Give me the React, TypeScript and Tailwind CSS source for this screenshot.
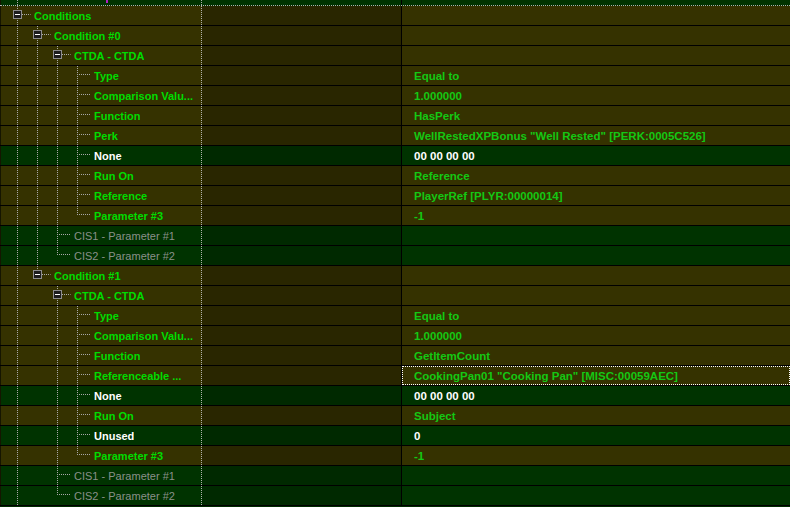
type Tone = 'olive' | 'green'

type Row = {
  label: string
  value?: string
  level: number
  box?: boolean
  last?: boolean
  guides: number[]
  tone: Tone
  white?: boolean
  dim?: boolean
  focus?: boolean
}

const rows: Row[] = [
  { label: 'Conditions', level: 0, box: true, guides: [], tone: 'olive' },
  { label: 'Condition #0', level: 1, box: true, guides: [0], tone: 'olive' },
  { label: 'CTDA - CTDA', level: 2, box: true, guides: [0, 1], tone: 'olive' },
  { label: 'Type', value: 'Equal to', level: 3, guides: [0, 1, 2], tone: 'olive' },
  { label: 'Comparison Valu...', value: '1.000000', level: 3, guides: [0, 1, 2], tone: 'olive' },
  { label: 'Function', value: 'HasPerk', level: 3, guides: [0, 1, 2], tone: 'olive' },
  {
    label: 'Perk',
    value: 'WellRestedXPBonus "Well Rested" [PERK:0005C526]',
    level: 3,
    guides: [0, 1, 2],
    tone: 'olive',
  },
  { label: 'None', value: '00 00 00 00', level: 3, guides: [0, 1, 2], tone: 'green', white: true },
  { label: 'Run On', value: 'Reference', level: 3, guides: [0, 1, 2], tone: 'olive' },
  {
    label: 'Reference',
    value: 'PlayerRef [PLYR:00000014]',
    level: 3,
    guides: [0, 1, 2],
    tone: 'olive',
  },
  { label: 'Parameter #3', value: '-1', level: 3, last: true, guides: [0, 1, 2], tone: 'olive' },
  { label: 'CIS1 - Parameter #1', level: 2, guides: [0, 1], tone: 'green', dim: true },
  { label: 'CIS2 - Parameter #2', level: 2, last: true, guides: [0, 1], tone: 'green', dim: true },
  { label: 'Condition #1', level: 1, box: true, last: true, guides: [0], tone: 'olive' },
  { label: 'CTDA - CTDA', level: 2, box: true, guides: [0], tone: 'olive' },
  { label: 'Type', value: 'Equal to', level: 3, guides: [0, 2], tone: 'olive' },
  { label: 'Comparison Valu...', value: '1.000000', level: 3, guides: [0, 2], tone: 'olive' },
  { label: 'Function', value: 'GetItemCount', level: 3, guides: [0, 2], tone: 'olive' },
  {
    label: 'Referenceable ...',
    value: 'CookingPan01 "Cooking Pan" [MISC:00059AEC]',
    level: 3,
    guides: [0, 2],
    tone: 'olive',
    focus: true,
  },
  { label: 'None', value: '00 00 00 00', level: 3, guides: [0, 2], tone: 'green', white: true },
  { label: 'Run On', value: 'Subject', level: 3, guides: [0, 2], tone: 'olive' },
  { label: 'Unused', value: '0', level: 3, guides: [0, 2], tone: 'green', white: true },
  { label: 'Parameter #3', value: '-1', level: 3, last: true, guides: [0, 2], tone: 'olive' },
  { label: 'CIS1 - Parameter #1', level: 2, guides: [0], tone: 'green', dim: true },
  { label: 'CIS2 - Parameter #2', level: 2, last: true, guides: [0], tone: 'green', dim: true },
]

const DOT = '#a8a8a8'

// x of the guide line for a level, in svg coordinates (after the 1px edge strip)
const gx = (level: number) => 16 + 20 * level + 0.5

function TreeGuides({ row }: { row: Row }) {
  const x = gx(row.level)
  const width = 33 + 20 * row.level
  return (
    <svg width={width} height={19} className="shrink-0">
      {row.guides.map((k) => (
        <line key={k} x1={gx(k)} y1={0} x2={gx(k)} y2={19} stroke={DOT} strokeDasharray="1 1" />
      ))}
      <line x1={x} y1={0} x2={x} y2={row.last ? 9 : 19} stroke={DOT} strokeDasharray="1 1" />
      <line
        x1={x + (row.box ? 4.5 : 1.5)}
        y1={8.5}
        x2={x + 13}
        y2={8.5}
        stroke={DOT}
        strokeDasharray="1 1"
      />
      {row.box && (
        <>
          <rect x={x - 4} y={4.5} width={8} height={8} fill="#1c1c1c" stroke="#8c8c8c" />
          <line x1={x - 2.5} y1={8.5} x2={x + 2.5} y2={8.5} stroke="#ffffff" />
        </>
      )}
    </svg>
  )
}

function TreeRow({ row }: { row: Row }) {
  const green = row.tone === 'green'
  const labelColor = row.dim ? 'text-[#8a908a] font-normal' : row.white ? 'text-white' : 'text-[#00dc00]'
  return (
    <div className="flex h-[20px] border-b border-black">
      <div className="w-[1px] shrink-0 bg-[#151500]" />
      <div
        className={`flex w-[201px] shrink-0 items-center border-r border-dotted border-[#b0b0b0] ${
          green ? 'bg-[#003300]' : 'bg-[#353200]'
        }`}
      >
        <TreeGuides row={row} />
        <span className={`truncate whitespace-nowrap pt-[1px] leading-[18px] ${labelColor}`}>
          {row.label}
        </span>
      </div>
      <div
        className={`w-[200px] shrink-0 border-r border-black ${green ? 'bg-[#002900]' : 'bg-[#292600]'}`}
      />
      <div
        className={`flex flex-1 items-center pt-[1px] pl-[12px] text-[11.5px] whitespace-nowrap leading-[18px] ${
          green ? 'bg-[#003300]' : 'bg-[#353200]'
        } ${row.white ? 'text-white' : 'text-[#14c814]'} ${
          row.focus ? 'outline-1 -outline-offset-1 outline-dotted outline-white' : ''
        }`}
      >
        {row.value}
      </div>
    </div>
  )
}

export default function App() {
  return (
    <div className="h-screen w-full overflow-hidden bg-[#002900] font-['Liberation_Sans',Arial,sans-serif] text-[11px] font-bold">
      <div className="flex h-[6px] border-b border-dotted border-[#b0b0b0] bg-[#003300]">
        <div className="w-[1px] shrink-0 bg-[#151500]" />
        <div className="relative w-[201px] shrink-0 border-r border-dotted border-[#b0b0b0]">
          <svg width={30} height={5} className="block">
            <line x1={16.5} y1={0} x2={16.5} y2={5} stroke={DOT} strokeDasharray="1 1" />
          </svg>
          <span className="absolute top-0 left-[105px] h-[3px] w-[2px] bg-[#b020c0]" />
        </div>
        <div className="w-[200px] shrink-0 border-r border-black" />
        <div className="flex-1" />
      </div>
      {rows.map((row, i) => (
        <TreeRow key={i} row={row} />
      ))}
    </div>
  )
}
